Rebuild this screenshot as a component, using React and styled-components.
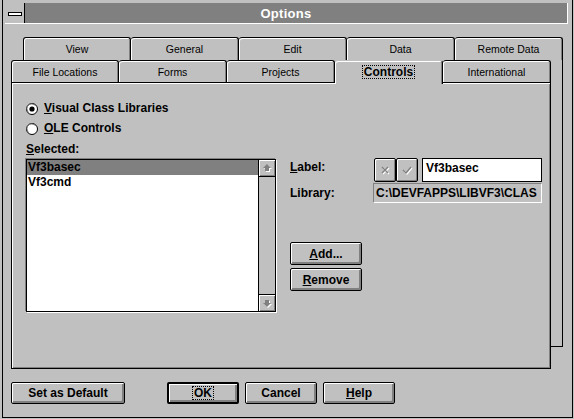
import styled, { createGlobalStyle } from "styled-components";

const GlobalStyle = createGlobalStyle`
  html, body { margin: 0; padding: 0; }
  body {
    background: #c0c0c0;
    font-family: "Liberation Sans", Arial, sans-serif;
    font-size: 12px;
    color: #000;
  }
  * { box-sizing: border-box; }
`;

const Window = styled.div`
  width: 574px;
  height: 419px;
  padding: 0 1px 1px 2px;
  background: #c0c0c0;
  overflow: hidden;
`;

const Frame = styled.div`
  height: 100%;
  border: 1px solid #000;
  border-top: none;
  display: flex;
  flex-direction: column;
`;

const TitleBar = styled.div`
  display: flex;
  height: 21px;
  margin: 3px 4px 0 2px;
  border-right: 1px solid #fff;
  border-bottom: 1px solid #fff;
`;

const SysMenu = styled.div`
  width: 20px;
  border-right: 1px solid #000;
  background: #c0c0c0;
  display: flex;
  align-items: center;
  justify-content: center;
  padding-top: 1px;
`;

const SysBar = styled.span`
  width: 14px;
  height: 4px;
  border: 1px solid #000;
  background: #fff;
`;

const Title = styled.div`
  flex: 1;
  background: #808080;
  color: #fff;
  font-weight: bold;
  font-size: 13px;
  letter-spacing: 0.3px;
  display: flex;
  align-items: center;
  justify-content: center;
  padding-right: 20px;
`;

const Content = styled.div`
  padding: 13px 0 0 8px;
`;

const TabArea = styled.div`
  display: grid;
  width: 552px;
`;

const BackStack = styled.div`
  grid-area: 1 / 1;
  margin-left: 12px;
  width: 540px;
  display: flex;
  flex-direction: column;
`;

const FrontStack = styled.div`
  grid-area: 1 / 1;
  margin-top: 23px;
  width: 540px;
  display: flex;
  flex-direction: column;
`;

const TabRow = styled.div`
  display: flex;
  align-items: flex-end;
  height: ${(p) => p.$h}px;
`;

const Tab = styled.div`
  flex: 0 0 108px;
  height: ${(p) => (p.$active ? p.$h + 2 : p.$h)}px;
  display: flex;
  align-items: center;
  justify-content: center;
  background: #c0c0c0;
  border-top: 1px solid ${(p) => (p.$active ? "#c0c0c0" : "#000")};
  border-right: 1px solid #000;
  border-radius: 3px 3px 0 0;
  box-shadow: inset 1px 1px 0 #fff, inset -1px 0 0 #808080;
  font-size: ${(p) => (p.$active ? 12 : 10.5)}px;
  font-weight: ${(p) => (p.$active ? "bold" : "normal")};
  position: relative;
  z-index: ${(p) => (p.$active ? 1 : 0)};
  margin-bottom: ${(p) => (p.$active ? -2 : 0)}px;
  padding-bottom: ${(p) => (p.$active ? 2 : 0)}px;
  &:first-child {
    border-left: 1px solid #000;
  }
`;

const Focus = styled.span`
  border: 1px dotted #000;
  padding: 0 1px;
  line-height: 12px;
`;

const BackPage = styled.div`
  height: 287px;
  border-right: 1px solid #000;
  border-bottom: 1px solid #000;
  background: #c0c0c0;
`;

const Panel = styled.div`
  height: 287px;
  background: #c0c0c0;
  border: 1px solid #000;
  box-shadow: inset 1px 1px 0 #fff, inset -1px -1px 0 #808080;
  padding: 18px 0 0 14px;
  display: grid;
  grid-template-columns: 250px 252px;
  column-gap: 14px;
  align-items: start;
`;

const Column = styled.div`
  display: flex;
  flex-direction: column;
  padding-top: ${(p) => p.$top || 0}px;
`;

const RadioRow = styled.div`
  display: flex;
  align-items: flex-start;
  gap: 6px;
  height: 20px;
  line-height: 14px;
  font-weight: bold;
  svg {
    flex: none;
    margin-top: 2px;
  }
`;

const U = styled.span`
  text-decoration: underline;
`;

const Caption = styled.div`
  margin-top: 1px;
  line-height: 14px;
  font-weight: bold;
`;

const ListBox = styled.div`
  margin-top: 3px;
  height: 153px;
  border: 1px solid #000;
  background: #fff;
  display: flex;
  box-shadow: -1px -1px 0 #808080, 1px 1px 0 #fff;
`;

const Items = styled.div`
  flex: 1;
  display: flex;
  flex-direction: column;
`;

const Item = styled.div`
  height: 15px;
  line-height: 15px;
  padding-left: 1px;
  font-weight: bold;
  background: ${(p) => (p.$selected ? "#808080" : "transparent")};
`;

const ScrollBar = styled.div`
  width: 17px;
  border-left: 1px solid #000;
  background: #c0c0c0;
  display: flex;
  flex-direction: column;
  justify-content: space-between;
`;

const ScrollButton = styled.div`
  height: 17px;
  background: #c0c0c0;
  border-${(p) => (p.$down ? "top" : "bottom")}: 1px solid #000;
  box-shadow: inset 1px 1px 0 #fff, inset -1px -1px 0 #808080;
  display: flex;
  align-items: center;
  justify-content: center;
`;

const FieldRow = styled.div`
  display: flex;
  align-items: flex-start;
  margin-top: ${(p) => p.$gap || 0}px;
`;

const FieldLabel = styled.div`
  width: 83px;
  flex: none;
  line-height: 14px;
  font-weight: bold;
  margin-top: ${(p) => p.$offset}px;
`;

const IconButton = styled.div`
  width: 22px;
  height: 24px;
  margin-left: ${(p) => p.$ml || 0}px;
  border: 1px solid #000;
  border-radius: 2px;
  background: #c0c0c0;
  box-shadow: inset 1px 1px 0 #fff, inset -1px -1px 0 #808080;
  display: flex;
  align-items: center;
  justify-content: center;
`;

const TextBox = styled.div`
  width: 120px;
  height: 24px;
  margin-left: 4px;
  border: 1px solid #000;
  background: #fff;
  padding-left: 3px;
  line-height: 18px;
  font-weight: bold;
`;

const ReadOnlyBox = styled.div`
  width: 169px;
  height: 20px;
  border: 1px solid;
  border-color: #808080 #fff #fff #808080;
  padding-left: 2px;
  line-height: 18px;
  font-weight: bold;
  white-space: nowrap;
  overflow: hidden;
`;

const Button = styled.button`
  width: ${(p) => p.$w || 72}px;
  height: ${(p) => p.$h || 22}px;
  margin-top: ${(p) => p.$mt || 0}px;
  margin-left: ${(p) => p.$ml || 0}px;
  padding: 0;
  background: #c0c0c0;
  border: ${(p) => (p.$default ? 2 : 1)}px solid #000;
  border-radius: 2px;
  box-shadow: inset 1px 1px 0 #fff, inset -2px -2px 0 #808080;
  font-family: inherit;
  font-size: 12px;
  font-weight: bold;
  color: #000;
  display: flex;
  align-items: center;
  justify-content: center;
`;

const ButtonBar = styled.div`
  display: flex;
  margin-top: 13px;
`;

const Radio = ({ checked }) => (
  <svg width="12" height="12" viewBox="0 0 12 12">
    <circle cx="6" cy="6" r="5.5" fill="#fff" stroke="#000" />
    <path d="M2.2 8.5 A4.4 4.4 0 0 1 8.5 2.2" fill="none" stroke="#808080" />
    {checked && <circle cx="6" cy="6" r="2.6" fill="#000" />}
  </svg>
);

const Arrow = ({ down }) => (
  <svg width="16" height="16" viewBox="0 0 16 16">
    <g transform={down ? "rotate(180 8 8)" : undefined}>
      <polygon
        points="8,4 12,8 10,8 10,11 6,11 6,8 4,8"
        fill="#fff"
        transform={down ? "translate(-1 -1)" : "translate(1 1)"}
      />
      <polygon points="8,4 12,8 10,8 10,11 6,11 6,8 4,8" fill="#808080" />
    </g>
  </svg>
);

const CrossIcon = () => (
  <svg width="12" height="12" viewBox="0 0 12 12">
    <path d="M3 3 L9 9 M9 3 L3 9" stroke="#fff" strokeWidth="1.3" transform="translate(1 1)" />
    <path d="M3 3 L9 9 M9 3 L3 9" stroke="#808080" strokeWidth="1.3" />
  </svg>
);

const CheckIcon = () => (
  <svg width="12" height="12" viewBox="0 0 12 12">
    <path d="M2 6 L5 9 L10 3" fill="none" stroke="#fff" strokeWidth="1.3" transform="translate(1 1)" />
    <path d="M2 6 L5 9 L10 3" fill="none" stroke="#808080" strokeWidth="1.3" />
  </svg>
);

const backTabs = ["View", "General", "Edit", "Data", "Remote Data"];
const frontTabs = ["File Locations", "Forms", "Projects", "Controls", "International"];

export default function App() {
  return (
    <>
      <GlobalStyle />
      <Window>
        <Frame>
          <TitleBar>
            <SysMenu>
              <SysBar />
            </SysMenu>
            <Title>Options</Title>
          </TitleBar>
          <Content>
            <TabArea>
              <BackStack>
                <TabRow $h={23}>
                  {backTabs.map((t) => (
                    <Tab key={t} $h={23}>
                      {t}
                    </Tab>
                  ))}
                </TabRow>
                <BackPage />
              </BackStack>
              <FrontStack>
                <TabRow $h={22}>
                  {frontTabs.map((t) => (
                    <Tab key={t} $h={22} $active={t === "Controls"}>
                      {t === "Controls" ? <Focus>{t}</Focus> : t}
                    </Tab>
                  ))}
                </TabRow>
                <Panel>
                  <Column>
                    <RadioRow>
                      <Radio checked />
                      <span>
                        <U>V</U>isual Class Libraries
                      </span>
                    </RadioRow>
                    <RadioRow>
                      <Radio />
                      <span>
                        <U>O</U>LE Controls
                      </span>
                    </RadioRow>
                    <Caption>
                      <U>S</U>elected:
                    </Caption>
                    <ListBox>
                      <Items>
                        <Item $selected>Vf3basec</Item>
                        <Item>Vf3cmd</Item>
                      </Items>
                      <ScrollBar>
                        <ScrollButton>
                          <Arrow />
                        </ScrollButton>
                        <ScrollButton $down>
                          <Arrow down />
                        </ScrollButton>
                      </ScrollBar>
                    </ListBox>
                  </Column>
                  <Column $top={57}>
                    <FieldRow>
                      <FieldLabel $offset={2}>
                        <U>L</U>abel:
                      </FieldLabel>
                      <IconButton $ml={1}>
                        <CrossIcon />
                      </IconButton>
                      <IconButton>
                        <CheckIcon />
                      </IconButton>
                      <TextBox>Vf3basec</TextBox>
                    </FieldRow>
                    <FieldRow $gap={1}>
                      <FieldLabel $offset={3}>Library:</FieldLabel>
                      <ReadOnlyBox>C:\DEVFAPPS\LIBVF3\CLAS</ReadOnlyBox>
                    </FieldRow>
                    <Button $h={23} $mt={39}>
                      <span>
                        <U>A</U>dd...
                      </span>
                    </Button>
                    <Button $h={23} $mt={3}>
                      <span>
                        <U>R</U>emove
                      </span>
                    </Button>
                  </Column>
                </Panel>
              </FrontStack>
            </TabArea>
            <ButtonBar>
              <Button $w={114}>Set as Default</Button>
              <Button $ml={42} $default>
                <Focus>OK</Focus>
              </Button>
              <Button $ml={6}>Cancel</Button>
              <Button $ml={6}>
                <span>
                  <U>H</U>elp
                </span>
              </Button>
            </ButtonBar>
          </Content>
        </Frame>
      </Window>
    </>
  );
}
